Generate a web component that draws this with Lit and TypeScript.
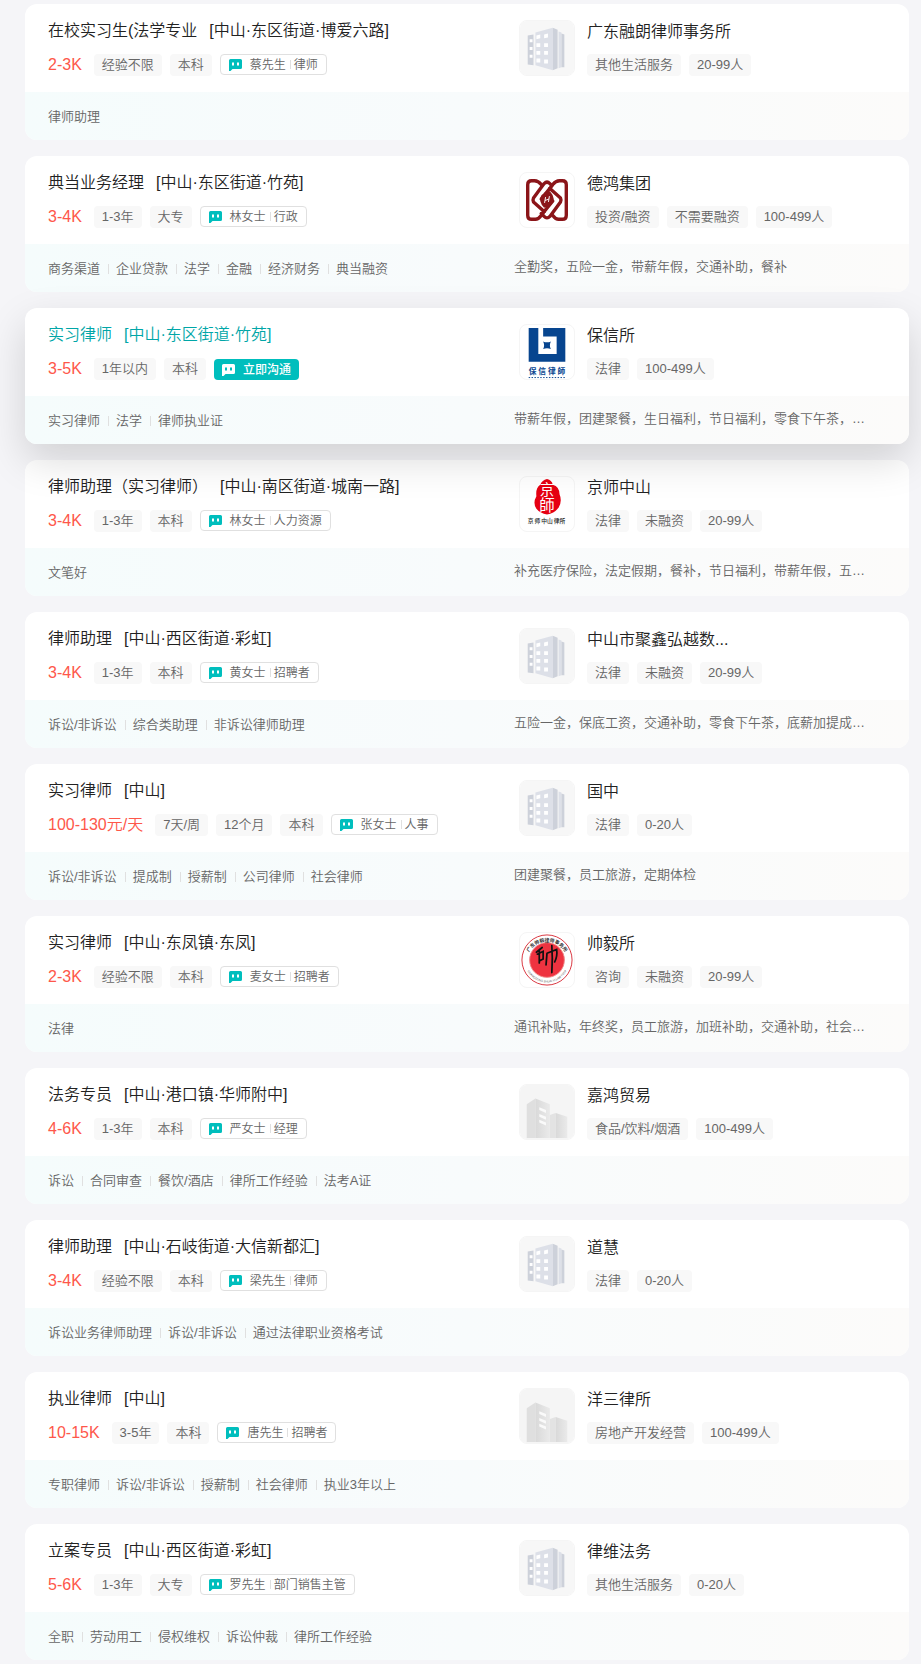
import { LitElement, html, css, svg, nothing } from "lit";
import { customElement, property } from "lit/decorators.js";

type LogoKind = "tower" | "blocks" | "knot" | "square" | "seal" | "round";

interface Job {
  title: string;
  area: string;
  salary: string;
  tags: string[];
  contact: string;
  role: string;
  keywords: string[];
  company: string;
  logo: LogoKind;
  companyTags: string[];
  welfare: string;
  active?: boolean;
}

const jobs: Job[] = [
  { title: "在校实习生(法学专业", area: "[中山·东区街道·博爱六路]", salary: "2-3K", tags: ["经验不限", "本科"], contact: "蔡先生", role: "律师", keywords: ["律师助理"], company: "广东融朗律师事务所", logo: "tower", companyTags: ["其他生活服务", "20-99人"], welfare: "" },
  { title: "典当业务经理", area: "[中山·东区街道·竹苑]", salary: "3-4K", tags: ["1-3年", "大专"], contact: "林女士", role: "行政", keywords: ["商务渠道", "企业贷款", "法学", "金融", "经济财务", "典当融资"], company: "德鸿集团", logo: "knot", companyTags: ["投资/融资", "不需要融资", "100-499人"], welfare: "全勤奖，五险一金，带薪年假，交通补助，餐补" },
  { title: "实习律师", area: "[中山·东区街道·竹苑]", salary: "3-5K", tags: ["1年以内", "本科"], contact: "", role: "", keywords: ["实习律师", "法学", "律师执业证"], company: "保信所", logo: "square", companyTags: ["法律", "100-499人"], welfare: "带薪年假，团建聚餐，生日福利，节日福利，零食下午茶，…", active: true },
  { title: "律师助理（实习律师）", area: "[中山·南区街道·城南一路]", salary: "3-4K", tags: ["1-3年", "本科"], contact: "林女士", role: "人力资源", keywords: ["文笔好"], company: "京师中山", logo: "seal", companyTags: ["法律", "未融资", "20-99人"], welfare: "补充医疗保险，法定假期，餐补，节日福利，带薪年假，五…" },
  { title: "律师助理", area: "[中山·西区街道·彩虹]", salary: "3-4K", tags: ["1-3年", "本科"], contact: "黄女士", role: "招聘者", keywords: ["诉讼/非诉讼", "综合类助理", "非诉讼律师助理"], company: "中山市聚鑫弘越数...", logo: "tower", companyTags: ["法律", "未融资", "20-99人"], welfare: "五险一金，保底工资，交通补助，零食下午茶，底薪加提成…" },
  { title: "实习律师", area: "[中山]", salary: "100-130元/天", tags: ["7天/周", "12个月", "本科"], contact: "张女士", role: "人事", keywords: ["诉讼/非诉讼", "提成制", "授薪制", "公司律师", "社会律师"], company: "国中", logo: "tower", companyTags: ["法律", "0-20人"], welfare: "团建聚餐，员工旅游，定期体检" },
  { title: "实习律师", area: "[中山·东凤镇·东凤]", salary: "2-3K", tags: ["经验不限", "本科"], contact: "麦女士", role: "招聘者", keywords: ["法律"], company: "帅毅所", logo: "round", companyTags: ["咨询", "未融资", "20-99人"], welfare: "通讯补贴，年终奖，员工旅游，加班补助，交通补助，社会…" },
  { title: "法务专员", area: "[中山·港口镇·华师附中]", salary: "4-6K", tags: ["1-3年", "本科"], contact: "严女士", role: "经理", keywords: ["诉讼", "合同审查", "餐饮/酒店", "律所工作经验", "法考A证"], company: "嘉鸿贸易", logo: "blocks", companyTags: ["食品/饮料/烟酒", "100-499人"], welfare: "" },
  { title: "律师助理", area: "[中山·石岐街道·大信新都汇]", salary: "3-4K", tags: ["经验不限", "本科"], contact: "梁先生", role: "律师", keywords: ["诉讼业务律师助理", "诉讼/非诉讼", "通过法律职业资格考试"], company: "道慧", logo: "tower", companyTags: ["法律", "0-20人"], welfare: "" },
  { title: "执业律师", area: "[中山]", salary: "10-15K", tags: ["3-5年", "本科"], contact: "唐先生", role: "招聘者", keywords: ["专职律师", "诉讼/非诉讼", "授薪制", "社会律师", "执业3年以上"], company: "洋三律所", logo: "blocks", companyTags: ["房地产开发经营", "100-499人"], welfare: "" },
  { title: "立案专员", area: "[中山·西区街道·彩虹]", salary: "5-6K", tags: ["1-3年", "大专"], contact: "罗先生", role: "部门销售主管", keywords: ["全职", "劳动用工", "侵权维权", "诉讼仲裁", "律所工作经验"], company: "律维法务", logo: "tower", companyTags: ["其他生活服务", "0-20人"], welfare: "" },
];

const logos = {
  tower: svg`
    <rect width="56" height="56" fill="#f7f7f7"/>
    <path d="M8 15L14 14V46L8 45Z" fill="#cdd1da"/>
    <path d="M16 12L34 7V51L16 46Z" fill="#dde0e8"/>
    <path d="M34 7L39 9V49L34 51Z" fill="#cdd1da"/>
    <path d="M40 11L43 12V48L40 49Z" fill="#dde0e8"/>
    <path d="M43 13L46 14V48L43 48Z" fill="#cdd1da"/>
    <path d="M10 19h3v3h-3zM10 27h3v3h-3zM10 35h3v3h-3zM17 15l4-1v4l-4 1zM25 14l4-1v4l-4 1zM17 23h4v4h-4zM25 23h4v4h-4zM17 31h4v4h-4zM25 31h4v4h-4zM17 39h4v4h-4zM25 40h4v4h-4z" fill="#fff"/>`,
  blocks: svg`
    <defs>
      <linearGradient id="face" x1="0" y1="0" x2="1" y2="0"><stop offset="0" stop-color="#d9d9d9"/><stop offset="1" stop-color="#eaeaea"/></linearGradient>
    </defs>
    <rect width="56" height="56" fill="#f5f5f5"/>
    <path d="M7 20L16 14V55H7Z" fill="#dfdfdf"/>
    <path d="M16 14L31 20V55H16Z" fill="url(#face)"/>
    <path d="M31 31L37 29V55H31Z" fill="#e3e3e3"/>
    <path d="M37 29L49 33V55H37Z" fill="url(#face)"/>
    <path d="M20 23l7 3v3l-7-3zM20 30l7 3v3l-7-3zM20 36l7 3v3l-7-3z" fill="#fafafa"/>`,
  knot: svg`
    <g fill="none" stroke="#8b1519" stroke-width="3.500" stroke-linejoin="round" stroke-linecap="round">
      <path d="M22 12Q19 8 15 8H12Q8 8 8 12V44Q8 48 12 48H16Q19 48 22 44L25 40"/>
      <path d="M34 44Q37 48 40 48H44Q48 48 48 44V12Q48 8 44 8H41Q37 8 34 12L31 16"/>
      <path d="M31 16L42 26Q43 28 42 30L31 45Q28 48 25 45L22 42M25 40L14 30Q13 28 14 26L25 11Q28 8 31 11L33 13"/>
      <path d="M31 16L22 27M25 40L34 29"/>
    </g>
    <path d="M31 19Q20 21 21 29Q22 33 25 36Q35 34 35 27Q34 22 31 19Z" fill="#8b1519"/>
    <path d="M26.500 25L25.500 31M30.500 24L29.500 30M26 28.500L30 27" stroke="#fff" fill="none"/>`,
  square: svg`
    <path d="M9 3H19V30H38V12H24V3H47V38H9Z" fill="#07458f"/>
    <path d="M24 17Q28 19 32 17Q30 21 32 25Q28 23 24 25Q26 21 24 17Z" fill="#07458f"/>
    <text x="9 19 29 39" y="51" font-size="8" font-weight="700" fill="#07458f">保信律師</text>
    <path d="M9 54.5H47" stroke="#07458f" stroke-dasharray="1.5 1.5"/>`,
  seal: svg`
    <path d="M28 2Q33 3 34 8Q41 10 41 18Q44 25 40 32Q35 38 28 39Q21 38 17 33Q13 27 17 20Q16 11 21 8Q23 3 28 2Z" fill="#e60012"/>
    <text x="28" y="19" text-anchor="middle" font-size="15" font-weight="400" fill="#fff">京</text>
    <text x="28" y="35" text-anchor="middle" font-size="16" font-weight="400" fill="#fff">師</text>
    <text x="8 15 22 28 35 41" y="48" font-size="6" font-weight="500" fill="#222">京师中山律所</text>`,
  round: svg`
    <defs>
      <path id="arc" d="M7 30A21 21 0 0 1 49 30"/>
      <path id="arc-low" d="M6 35A23 23 0 0 0 50 35"/>
    </defs>
    <circle cx="28" cy="28" r="26" fill="#fff" stroke="#d8323c" stroke-width="1"/>
    <circle cx="28" cy="28" r="18" fill="#ee3340" stroke="#e88" stroke-width="1"/>
    <text font-size="5" font-weight="700" fill="#333"><textPath href="#arc" startOffset="50%" text-anchor="middle">广东帅毅律师事务所</textPath></text>
    <text font-size="3" fill="#555"><textPath href="#arc-low" startOffset="50%" text-anchor="middle">GUANGDONG SHUAI YI LAW FIRM</textPath></text>
    <path d="M17 20L23 15M20 18V31M18 22L24 19V27L20 29M28 21L38 17Q39 24 36 30M28 21L27 33M33 13Q34 26 33 41" fill="none" stroke="#111" stroke-width="1.8" stroke-linecap="round"/>`,
};

@customElement("job-card")
export class JobCard extends LitElement {
  @property({ attribute: false }) job!: Job;

  static styles = css`
    :host {
      display: block;
    }
    .card {
      border-radius: 12px;
      background: #fff;
      color: #222;
      font-size: 16px;
      line-height: 22px;
    }
    .card.active {
      position: relative;
      box-shadow: 0 16px 40px rgba(0, 0, 0, 0.15);
    }
    .main {
      display: grid;
      grid-template-columns: minmax(0, 1fr) 390px;
      height: 88px;
    }
    .position {
      padding: 16px 0 0 23px;
    }
    .title {
      display: flex;
      gap: 12px;
      color: inherit;
      text-decoration: none;
      white-space: nowrap;
    }
    .active .title {
      color: #00a6a7;
    }
    .row {
      display: flex;
      gap: 8px;
      height: 22px;
      margin-top: 12px;
      white-space: nowrap;
    }
    .salary {
      margin-right: 4px;
      color: #fe574a;
    }
    .tag {
      padding: 0 8px;
      border-radius: 4px;
      background: #f8f8f8;
      color: #666;
      font-size: 13px;
    }
    .chat {
      display: flex;
      align-items: center;
      box-sizing: border-box;
      height: 21px;
      padding: 0 8px;
      border: 1px solid #e0e0e0;
      border-radius: 4px;
      background: #fff;
      color: #666;
      font-family: inherit;
      font-size: 12px;
      font-weight: inherit;
      line-height: 18px;
      cursor: pointer;
    }
    .active .chat {
      align-self: flex-end;
      border: none;
      background: #00bebd;
      color: #fff;
      font-weight: 500;
    }
    .bubble {
      width: 13px;
      height: 12px;
      margin-right: 8px;
      color: #00bebd;
    }
    .active .bubble {
      color: #fff;
    }
    .role {
      display: flex;
      align-items: center;
    }
    .role::before {
      content: "";
      width: 1px;
      height: 9px;
      margin: 0 3px 0 4px;
      background: #e0e0e0;
    }
    .company {
      display: flex;
      gap: 12px;
      padding-top: 16px;
    }
    .logo {
      box-sizing: border-box;
      width: 56px;
      height: 56px;
      border: 1px solid #f5f5f5;
      border-radius: 8px;
      overflow: hidden;
    }
    .name {
      display: block;
      padding-top: 1px;
      color: inherit;
      text-decoration: none;
      white-space: nowrap;
    }
    .company .row {
      margin-top: 11px;
    }
    .foot {
      display: grid;
      grid-template-columns: minmax(0, 1fr) 395px;
      height: 48px;
      border-radius: 0 0 12px 12px;
      background: linear-gradient(90deg, #f5fcfc 0%, #f8fbfc 50%, #fcfbfa 100%);
      color: #666;
      font-size: 13px;
      line-height: 18px;
    }
    .keywords {
      display: flex;
      align-items: flex-start;
      margin: 0;
      padding: 16px 0 0 23px;
      list-style: none;
      white-space: nowrap;
    }
    .keyword {
      display: flex;
      align-items: center;
    }
    .keyword + .keyword::before {
      content: "";
      width: 1px;
      height: 10px;
      margin: 0 7px 0 8px;
      background: #e0e0e0;
    }
    .welfare {
      padding: 14px 40px 0 0;
      overflow: hidden;
      text-overflow: ellipsis;
      white-space: nowrap;
    }
  `;

  private bubble(face: string) {
    return html`<svg class="bubble" viewBox="0 0 13 12" aria-hidden="true">
      <path d="M1.5 0H11.5Q13 0 13 1.5V8.5Q13 10 11.500 10H3.500L1.500 12H0V1.500Q0 0 1.500 0Z" fill="currentColor"/>
      <path d="M3 3.500H5V6.500H3ZM8 3.500H10V6.500H8Z" fill=${face}/>
    </svg>`;
  }

  render() {
    const job = this.job;
    return html`
      <article class="card ${job.active ? "active" : ""}">
        <div class="main">
          <div class="position">
            <a class="title" href="#"><span>${job.title}</span><span>${job.area}</span></a>
            <div class="row">
              <span class="salary">${job.salary}</span>
              ${job.tags.map((tag) => html`<span class="tag">${tag}</span>`)}
              <button class="chat" type="button">
                ${this.bubble(job.active ? "#00bebd" : "#fff")}
                ${job.active
                  ? html`<span>立即沟通</span>`
                  : html`<span>${job.contact}</span><span class="role">${job.role}</span>`}
              </button>
            </div>
          </div>
          <div class="company">
            <svg class="logo" viewBox="0 0 56 56" aria-hidden="true">${logos[job.logo]}</svg>
            <div>
              <a class="name" href="#">${job.company}</a>
              <div class="row">${job.companyTags.map((tag) => html`<span class="tag">${tag}</span>`)}</div>
            </div>
          </div>
        </div>
        <div class="foot">
          <ul class="keywords">${job.keywords.map((word) => html`<li class="keyword">${word}</li>`)}</ul>
          ${job.welfare ? html`<div class="welfare">${job.welfare}</div>` : nothing}
        </div>
      </article>
    `;
  }
}

@customElement("app-root")
export class AppRoot extends LitElement {
  static styles = css`
    :host {
      display: block;
      background: #f5f5f8;
      font-family: "Liberation Sans", "Noto Sans CJK SC", sans-serif;
      font-weight: 350;
    }
    .list {
      display: flex;
      flex-direction: column;
      gap: 16px;
      padding: 4px 12px 4px 25px;
    }
  `;

  render() {
    return html`<main class="list">${jobs.map((job) => html`<job-card .job=${job}></job-card>`)}</main>`;
  }
}
